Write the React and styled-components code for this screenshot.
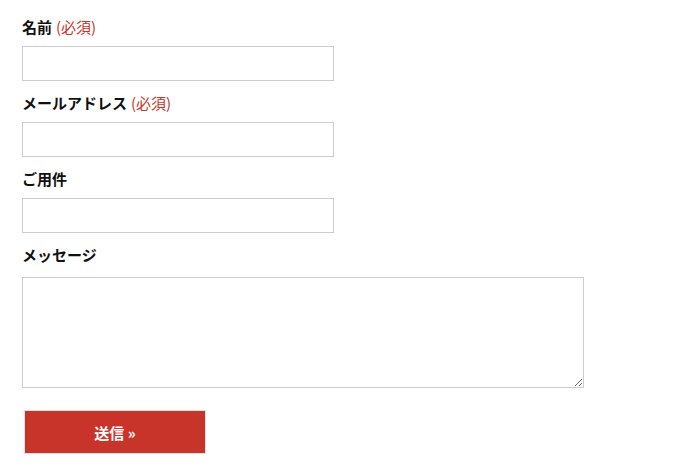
import React from 'react';
import styled, { createGlobalStyle } from 'styled-components';

const GlobalStyle = createGlobalStyle`
  body {
    margin: 0;
    background: #fff;
    font-family: "Noto Sans CJK JP", "Liberation Sans", sans-serif;
    color: #111;
  }
`;

const Form = styled.form`
  display: flex;
  flex-direction: column;
  padding: 17px 0 0 22px;
`;

const Field = styled.div`
  display: flex;
  flex-direction: column;
  align-items: flex-start;
  margin-bottom: ${(p) => (p.$last ? '22px' : '12px')};
`;

const Label = styled.label`
  font-size: 15px;
  font-weight: 700;
  line-height: 20px;
  margin-bottom: ${(p) => (p.$gap ? '12px' : '9px')};
`;

const Required = styled.span`
  color: #c9342a;
  font-weight: 400;
  margin-left: 4px;
`;

const Input = styled.input`
  box-sizing: border-box;
  width: 312px;
  height: 35px;
  border: 1px solid #cccccc;
  margin: 0;
  padding: 4px 8px;
  font-size: 14px;
  outline: none;
`;

const TextArea = styled.textarea`
  box-sizing: border-box;
  width: 562px;
  height: 111px;
  border: 1px solid #cccccc;
  margin: 0;
  padding: 4px 8px;
  font-size: 14px;
  outline: none;
`;

const Submit = styled.button`
  box-sizing: border-box;
  width: 182px;
  height: 44px;
  margin-left: 2px;
  background: #c9342a;
  border: 1px solid #e2e2e2;
  color: #fff;
  font-family: inherit;
  font-size: 15px;
  font-weight: 700;
  cursor: pointer;
`;

const fields = [
  { name: 'name', label: '名前', required: true },
  { name: 'email', label: 'メールアドレス', required: true },
  { name: 'subject', label: 'ご用件' },
];

export default function App() {
  return (
    <>
      <GlobalStyle />
      <Form onSubmit={(e) => e.preventDefault()}>
        {fields.map((f) => (
          <Field key={f.name}>
            <Label htmlFor={f.name}>
              {f.label}
              {f.required && <Required>(必須)</Required>}
            </Label>
            <Input id={f.name} type="text" />
          </Field>
        ))}
        <Field $last>
          <Label htmlFor="message" $gap>メッセージ</Label>
          <TextArea id="message" />
        </Field>
        <div>
          <Submit type="submit">送信 »</Submit>
        </div>
      </Form>
    </>
  );
}
